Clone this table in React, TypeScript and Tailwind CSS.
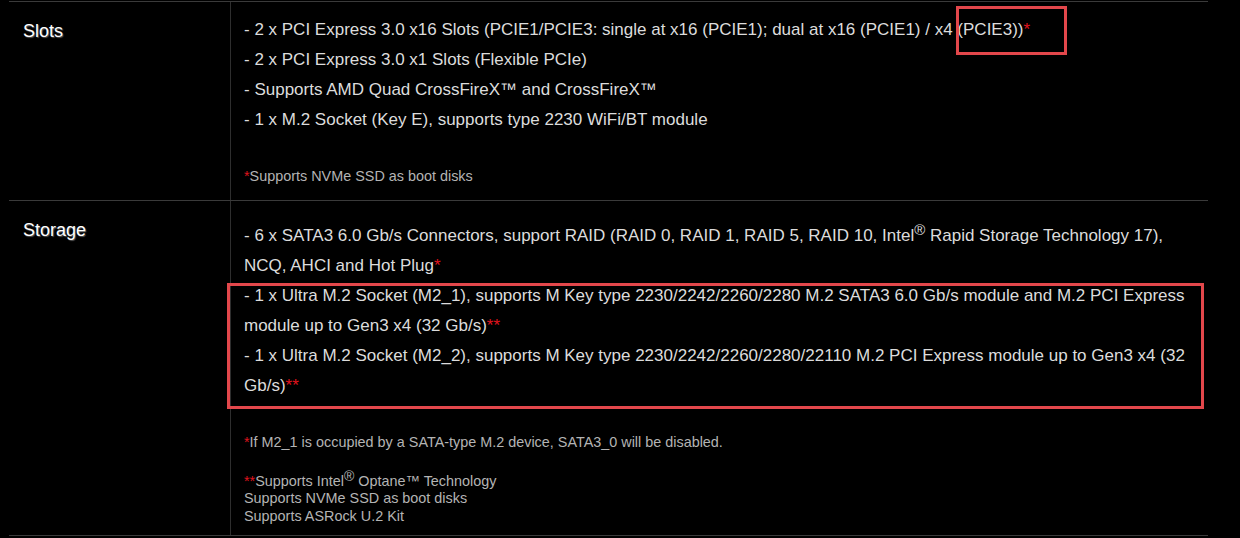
import React from "react";

const Star = ({ n = 1 }: { n?: number }) => (
  <span className="text-[#e0141e]">{"*".repeat(n)}</span>
);

const Reg = () => (
  <sup className="relative -top-[6px] text-[15px] leading-none">®</sup>
);

const slots = [
  <>
    - 2 x PCI Express 3.0 x16 Slots (PCIE1/PCIE3: single at x16 (PCIE1); dual at x16 (PCIE1) / x4 (PCIE3))
    <Star />
  </>,
  <>- 2 x PCI Express 3.0 x1 Slots (Flexible PCIe)</>,
  <>- Supports AMD Quad CrossFireX™ and CrossFireX™</>,
  <>- 1 x M.2 Socket (Key E), supports type 2230 WiFi/BT module</>,
];

const Label = ({ children }: { children: React.ReactNode }) => (
  <div className="pl-[14px] pt-[14px] text-[18px] leading-[30px] text-white [text-shadow:1px_1px_1px_#555]">
    {children}
  </div>
);

export default function App() {
  return (
    <div className="min-h-screen bg-black pt-px pl-[9px] font-['Liberation_Sans',Arial,sans-serif]">
      <div className="w-[1199px] border-t border-b border-[#3a3a3a]">
        {/* Slots */}
        <div className="grid grid-cols-[221px_1fr] border-b border-[#3a3a3a]">
          <Label>Slots</Label>
          <div className="relative border-l border-[#2e2e2e] pl-[13px] pr-[10px] pt-[13px] pb-[15px]">
            <div className="text-[17px] leading-[30px] text-[#dcdcdc]">
              {slots.map((s, i) => (
                <div key={i}>{s}</div>
              ))}
            </div>
            <div className="mt-[32px] text-[14.4px] leading-[18px] text-[#b4b4b4]">
              <Star />
              Supports NVMe SSD as boot disks
            </div>
            <div className="absolute left-[725px] top-[4px] h-[49px] w-[111px] border-[3px] border-[#e2474b]" />
          </div>
        </div>

        {/* Storage */}
        <div className="grid grid-cols-[221px_1fr]">
          <Label>Storage</Label>
          <div className="relative border-l border-[#2e2e2e] pl-[13px] pr-[10px] pt-[20px] pb-[10px]">
            <div className="text-[17px] leading-[30px] text-[#dcdcdc]">
              <div>
                - 6 x SATA3 6.0 Gb/s Connectors, support RAID (RAID 0, RAID 1, RAID 5, RAID 10, Intel
                <Reg /> Rapid Storage Technology 17),
                <br />
                NCQ, AHCI and Hot Plug
                <Star />
              </div>
              <div>
                - 1 x Ultra M.2 Socket (M2_1), supports M Key type 2230/2242/2260/2280 M.2 SATA3 6.0 Gb/s module and M.2 PCI Express
                <br />
                module up to Gen3 x4 (32 Gb/s)
                <Star n={2} />
              </div>
              <div>
                - 1 x Ultra M.2 Socket (M2_2), supports M Key type 2230/2242/2260/2280/22110 M.2 PCI Express module up to Gen3 x4 (32
                <br />
                Gb/s)
                <Star n={2} />
              </div>
            </div>
            <div className="mt-[33px] text-[14.4px] leading-[17.5px] text-[#b4b4b4]">
              <Star />
              If M2_1 is occupied by a SATA-type M.2 device, SATA3_0 will be disabled.
            </div>
            <div className="mt-[21px] text-[14.4px] leading-[17.5px] text-[#b4b4b4]">
              <div>
                <Star n={2} />
                Supports Intel
                <sup className="relative -top-[5px] text-[14px] leading-none">®</sup> Optane™ Technology
              </div>
              <div>Supports NVMe SSD as boot disks</div>
              <div>Supports ASRock U.2 Kit</div>
            </div>
            <div className="absolute left-[-4px] top-[82px] h-[126px] w-[977px] border-[3px] border-[#e2474b]" />
          </div>
        </div>
      </div>
    </div>
  );
}
